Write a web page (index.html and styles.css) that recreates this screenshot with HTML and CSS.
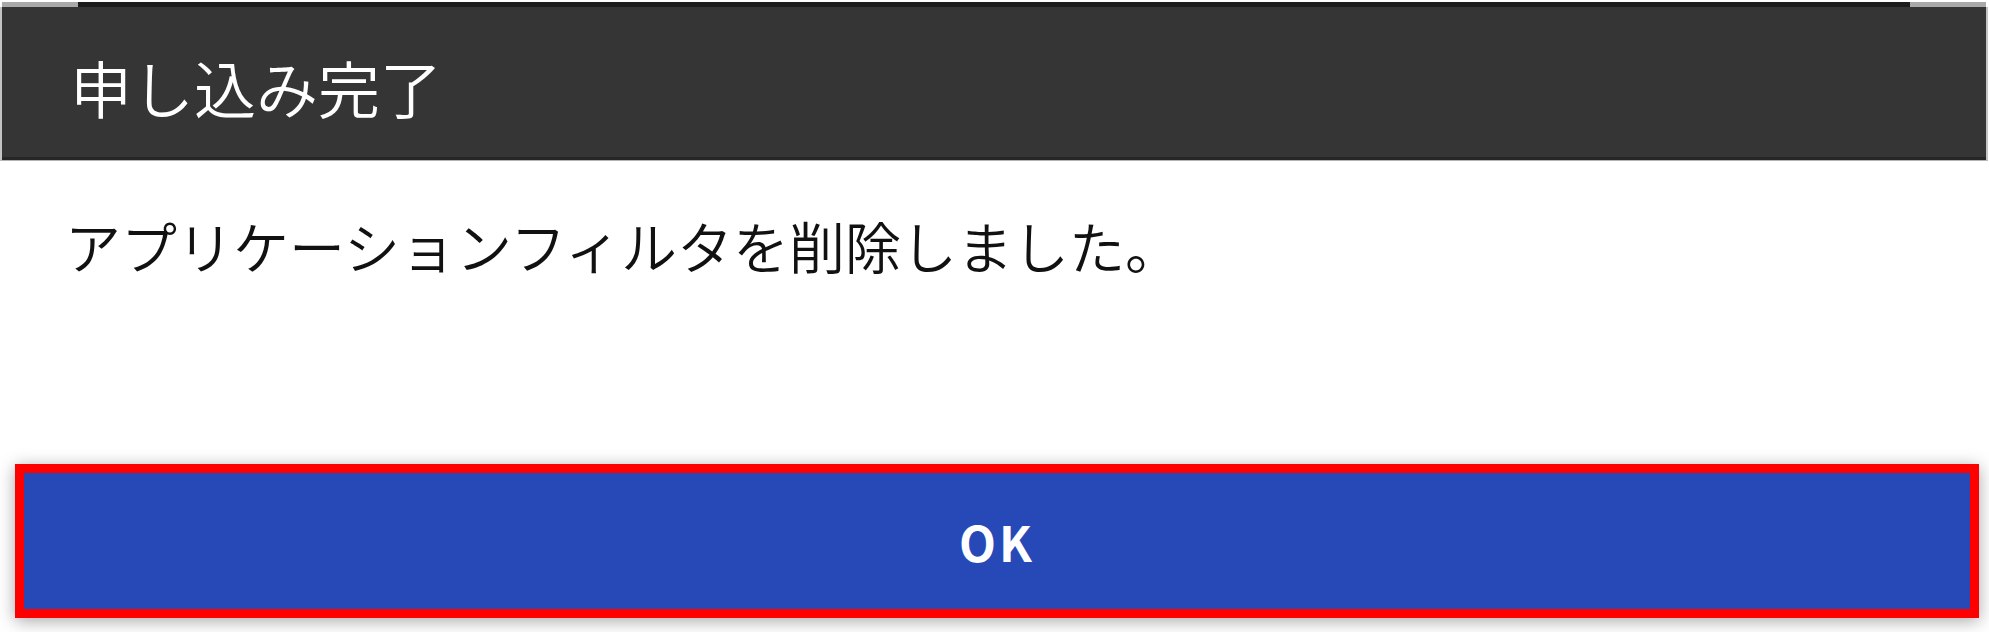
FILE: index.html
```html
<!DOCTYPE html>
<html lang="ja">
<head>
<meta charset="utf-8">
<title>申し込み完了</title>
<link rel="stylesheet" href="styles.css">
</head>
<body>
<div class="dialog">
  <div class="strip">
    <span class="strip-end"></span>
    <span class="strip-mid"></span>
    <span class="strip-end"></span>
  </div>
  <div class="header-wrap">
    <header class="header">
      <h1 class="title">申し込み完了</h1>
    </header>
  </div>
  <div class="message">
    <p class="message-text">アプリケーションフィルタを削除しました。</p>
  </div>
  <div class="actions">
    <button class="ok-button" type="button">OK</button>
  </div>
</div>
</body>
</html>
```

FILE: styles.css
```css
html, body {
  margin: 0;
  padding: 0;
  background: #ffffff;
}

body {
  font-family: "Noto Sans CJK JP", "Noto Sans", sans-serif;
  width: 1989px;
  height: 632px;
  overflow: hidden;
}

.dialog {
  display: flex;
  flex-direction: column;
}

.strip {
  display: flex;
  height: 5px;
  margin: 2px 3px 0 2px;
}

.strip-end {
  width: 76px;
  background: #a9a9a9;
}

.strip-mid {
  flex: 1;
  background: #1c1c1c;
}

.header-wrap {
  margin: 0 1px 0 0;
  border-left: 2px solid #c4c4c4;
  border-right: 2px solid #c4c4c4;
  border-bottom: 1px solid #b4b4b4;
}

.header {
  background: #353535;
  height: 150px;
  border-bottom: 3px solid #262626;
  box-sizing: content-box;
  padding: 0 0 0 68px;
}

.title {
  margin: 0;
  padding-top: 49px;
  font-size: 62px;
  line-height: 1;
  font-weight: 350;
  color: #ffffff;
}

.message {
  padding: 56px 70px 0 65px;
}

.message-text {
  margin: 0;
  font-size: 56px;
  line-height: 1;
  font-weight: 350;
  color: #111111;
}

.actions {
  margin-top: 191px;
  padding: 0 10px 0 15px;
}

.ok-button {
  display: block;
  width: 100%;
  height: 154px;
  box-sizing: border-box;
  border: 9px solid #ff0000;
  background: #2749b8;
  color: #ffffff;
  font-family: "Noto Sans CJK JP", "Noto Sans", sans-serif;
  font-size: 48px;
  font-weight: 700;
  letter-spacing: 3px;
  box-shadow: 0 3px 16px rgba(0, 0, 0, 0.35);
  padding: 0;
}
```
